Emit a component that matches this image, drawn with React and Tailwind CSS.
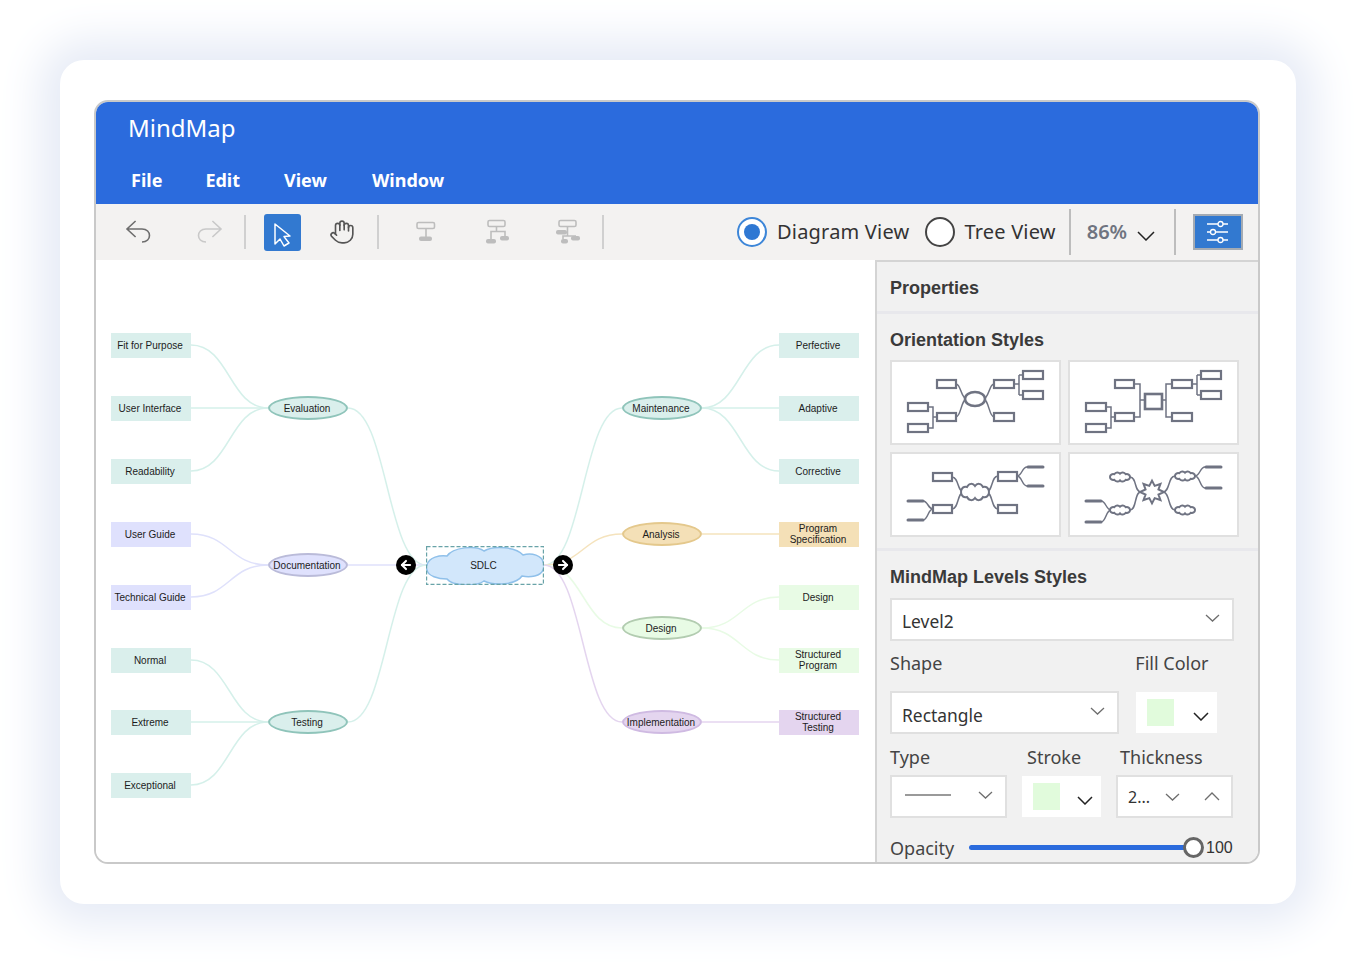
import { ArrowLeft, ArrowRight, Hand } from "lucide-react";

// all diagram coordinates are page pixels, the canvas starts at 96,260
const ORIGIN_X = 96;
const ORIGIN_Y = 260;

const TEAL = { fill: "#daefec", stroke: "#8fc4ba", edge: "#d5f0ea" };
const PURPLE = { fill: "#dfe1fd", stroke: "#babbd9", edge: "#dfe1fb" };
const ORANGE = { fill: "#f4e0b7", stroke: "#e4c88c", edge: "#f5e3bd" };
const GREEN = { fill: "#e8fbe5", stroke: "#b2ccb0", edge: "#e8fbe5" };
const VIOLET = { fill: "#e4d5ef", stroke: "#cfbae2", edge: "#e4d5ef" };

const BRANCHES = [
  {
    label: "Evaluation",
    y: 408,
    side: "left",
    color: TEAL,
    leaves: [
      { label: "Fit for Purpose", y: 345 },
      { label: "User Interface", y: 408 },
      { label: "Readability", y: 471 },
    ],
  },
  {
    label: "Documentation",
    y: 565,
    side: "left",
    color: PURPLE,
    leaves: [
      { label: "User Guide", y: 534 },
      { label: "Technical Guide", y: 597 },
    ],
  },
  {
    label: "Testing",
    y: 722,
    side: "left",
    color: TEAL,
    leaves: [
      { label: "Normal", y: 660 },
      { label: "Extreme", y: 722 },
      { label: "Exceptional", y: 785 },
    ],
  },
  {
    label: "Maintenance",
    y: 408,
    side: "right",
    color: TEAL,
    leaves: [
      { label: "Perfective", y: 345 },
      { label: "Adaptive", y: 408 },
      { label: "Corrective", y: 471 },
    ],
  },
  {
    label: "Analysis",
    y: 534,
    side: "right",
    color: ORANGE,
    leaves: [{ label: "Program\nSpecification", y: 534 }],
  },
  {
    label: "Design",
    y: 628,
    side: "right",
    color: GREEN,
    leaves: [
      { label: "Design", y: 597 },
      { label: "Structured\nProgram", y: 660 },
    ],
  },
  {
    label: "Implementation",
    y: 722,
    side: "right",
    color: VIOLET,
    leaves: [{ label: "Structured\nTesting", y: 722 }],
  },
];

function curve(x1, y1, x2, y2) {
  const mid = (x1 + x2) / 2;
  return `M${x1} ${y1} C${mid} ${y1} ${mid} ${y2} ${x2} ${y2}`;
}

function Edges() {
  return (
    <svg className="absolute left-0 top-0" width="779" height="602" viewBox={`${ORIGIN_X} ${ORIGIN_Y} 779 602`} fill="none" strokeWidth="1.5">
      {BRANCHES.map((branch) => {
        const left = branch.side === "left";
        return (
          <g key={branch.label} stroke={branch.color.edge}>
            <path d={left ? curve(348, branch.y, 426, 565) : curve(544, 565, 622, branch.y)} />
            {branch.leaves.map((leaf) => (
              <path
                key={leaf.label}
                d={left ? curve(191, leaf.y, 268, branch.y) : curve(702, branch.y, 779, leaf.y)}
              />
            ))}
          </g>
        );
      })}
    </svg>
  );
}

function Leaf({ x, y, label, color }) {
  return (
    <div
      className="absolute flex h-[25px] w-20 items-center justify-center whitespace-pre-line pr-0.5 text-center text-[10px] leading-[11px] text-[#1c1c1c]"
      style={{ left: x - ORIGIN_X, top: y - 12.5 - ORIGIN_Y, backgroundColor: color.fill }}
    >
      {label}
    </div>
  );
}

function Branch({ x, y, label, color }) {
  return (
    <div
      className="absolute flex h-6 w-20 items-center justify-center rounded-[50%] border-2 pr-0.5 text-[10px] text-[#1c1c1c]"
      style={{ left: x - ORIGIN_X, top: y - 12 - ORIGIN_Y, backgroundColor: color.fill, borderColor: color.stroke }}
    >
      {label}
    </div>
  );
}

function CenterNode() {
  return (
    <div className="absolute left-[330px] top-[286px] h-[39px] w-[118px]">
      <svg className="absolute left-0 top-0" width="118" height="39" viewBox="0 0 118 39">
        <path
          d="M1 19C3 11 14 9 21 10C27 1 50 -1 58 5C68 -1 90 1 97 9C106 6 116 10 117 16C119 18 119 22 117 24C115 30 104 32 96 30C90 39 68 40 58 35C50 41 27 40 21 33C12 33 2 30 1 24C0 22 0 20 1 19Z"
          fill="#d2e7fb"
          stroke="#8fc0ea"
          strokeWidth="1.5"
        />
        <rect x="0.5" y="0.5" width="117" height="38" fill="none" stroke="#69a3a8" strokeWidth="1.4" strokeDasharray="4 2" />
      </svg>
      <div className="absolute inset-0 flex items-center justify-center pr-[3px] text-[10px] text-[#1c1c1c]">SDLC</div>
    </div>
  );
}

function Diagram() {
  return (
    <div className="relative w-[779px] shrink-0 bg-white font-['Liberation_Sans',sans-serif]">
      <Edges />
      {BRANCHES.map((branch) => {
        const left = branch.side === "left";
        return (
          <div key={branch.label}>
            <Branch x={left ? 268 : 622} y={branch.y} label={branch.label} color={branch.color} />
            {branch.leaves.map((leaf) => (
              <Leaf key={leaf.label} x={left ? 111 : 779} y={leaf.y} label={leaf.label} color={branch.color} />
            ))}
          </div>
        );
      })}
      <CenterNode />
      <div className="absolute left-[300px] top-[295px] flex h-5 w-5 items-center justify-center rounded-full bg-black text-white">
        <ArrowLeft size={14} strokeWidth={3.5} />
      </div>
      <div className="absolute left-[457px] top-[295px] flex h-5 w-5 items-center justify-center rounded-full bg-black text-white">
        <ArrowRight size={14} strokeWidth={3.5} />
      </div>
    </div>
  );
}

function Chevron({ width = 15, height = 8, up = false, color = "#6e6e6e", weight = 1.3, className = "" }) {
  const d = up
    ? `M1 ${height - 1}L${width / 2} 1L${width - 1} ${height - 1}`
    : `M1 1L${width / 2} ${height - 1}L${width - 1} 1`;
  return (
    <svg className={`shrink-0 ${className}`} width={width} height={height} viewBox={`0 0 ${width} ${height}`} fill="none" stroke={color} strokeWidth={weight}>
      <path d={d} />
    </svg>
  );
}

function ToolSeparator() {
  return <div className="h-[34px] w-0.5 shrink-0 bg-[#d0d0d0]" />;
}

function Undo({ color }) {
  return (
    <svg width="28" height="28" viewBox="0 0 28 28" fill="none" stroke={color} strokeWidth="1.6">
      <path d="M10.6 3L2 11L10.6 19M2 11H17C27 11 27 24 17 24" />
    </svg>
  );
}

function Redo({ color }) {
  return (
    <svg width="28" height="28" viewBox="0 0 28 28" fill="none" stroke={color} strokeWidth="1.6">
      <path d="M17.4 3L26 11L17.4 19M26 11H11C1 11 1 24 11 24" />
    </svg>
  );
}

function SingleNodeIcon() {
  return (
    <svg width="28" height="28" viewBox="0 0 28 28" fill="none" stroke="#bdbdbd" strokeWidth="1.6">
      <rect x="5" y="4.5" width="17.5" height="6" rx="1.5" />
      <path d="M14 10.5V19" />
      <rect x="7" y="18.5" width="13" height="4.5" rx="2" fill="#bdbdbd" stroke="none" />
    </svg>
  );
}

function TwoNodeIcon() {
  return (
    <svg width="28" height="28" viewBox="0 0 28 28" fill="none" stroke="#bdbdbd" strokeWidth="1.6">
      <rect x="5" y="2.5" width="17" height="6" rx="1.5" />
      <path d="M13.5 8.5V13.5M8 21V13.5H22V18" />
      <rect x="3" y="21" width="10" height="4.5" rx="2" fill="#bdbdbd" stroke="none" />
      <rect x="17" y="18" width="9" height="4.5" rx="2" fill="#bdbdbd" stroke="none" />
    </svg>
  );
}

function ThreeNodeIcon() {
  return (
    <svg width="28" height="28" viewBox="0 0 28 28" fill="none" stroke="#bdbdbd" strokeWidth="1.6">
      <rect x="6" y="2.5" width="17" height="6" rx="1.5" />
      <path d="M14.5 8.5V18M10 21V18H23" />
      <rect x="3" y="12" width="11" height="4.5" rx="2" fill="#bdbdbd" stroke="none" />
      <rect x="18" y="18" width="9" height="4.5" rx="2" fill="#bdbdbd" stroke="none" />
      <rect x="8" y="21" width="7" height="4.5" rx="2" fill="#bdbdbd" stroke="none" />
    </svg>
  );
}

function Radio({ checked }) {
  return (
    <div
      className={`flex h-[30px] w-[30px] shrink-0 items-center justify-center rounded-full border-2 bg-white ${
        checked ? "border-[#3d86d8]" : "border-[#444]"
      }`}
    >
      {checked && <div className="h-4 w-4 rounded-full bg-[#2f78d3]" />}
    </div>
  );
}

function Toolbar() {
  return (
    <div className="flex h-14 items-center bg-[#f3f2f1] font-['Noto_Sans',sans-serif]">
      <div className="ml-[29px] flex w-7 justify-center"><Undo color="#6e6e6e" /></div>
      <div className="ml-[42px] flex w-7 justify-center"><Redo color="#c9c9c9" /></div>
      <div className="ml-[21px]"><ToolSeparator /></div>
      <div className="relative ml-[18px] h-[37px] w-[37px] rounded-[3px] bg-[#3279d0]">
        <svg className="absolute left-0 top-0" width="37" height="37" viewBox="0 0 37 37" fill="none" stroke="#fff" strokeWidth="1.5" strokeLinejoin="round">
          <path d="M11 10V30L16 25L20 32L25 29L20 22.6L26 22Z" />
        </svg>
      </div>
      <div className="ml-[27px] flex w-7 justify-center text-[#555]"><Hand size={26} strokeWidth={1.5} /></div>
      <div className="ml-[21px]"><ToolSeparator /></div>
      <div className="ml-[33px]"><SingleNodeIcon /></div>
      <div className="ml-[43px]"><TwoNodeIcon /></div>
      <div className="ml-[42px]"><ThreeNodeIcon /></div>
      <div className="ml-[21px]"><ToolSeparator /></div>
      <div className="ml-[133px]"><Radio checked /></div>
      <span className="ml-2.5 text-[20px] tracking-[0.2px] text-[#333]">Diagram View</span>
      <div className="ml-4"><Radio /></div>
      <span className="ml-[9px] text-[20px] tracking-[0.2px] text-[#333]">Tree View</span>
      <div className="ml-[13px] h-[46px] w-0.5 bg-[#bdbdbd]" />
      <span className="ml-4 text-[20px] font-semibold text-[#6f7480]">86%</span>
      <Chevron className="ml-2.5 mt-2" width={18} height={10} color="#222" weight={1.5} />
      <div className="ml-[19px] h-[46px] w-0.5 bg-[#bdbdbd]" />
      <div className="ml-[17px] flex h-[36px] w-[50px] items-center justify-center border-2 border-[#a4abb3] bg-[#3279d0]">
        <svg width="24" height="24" viewBox="0 0 24 24" fill="none" stroke="#fff" strokeWidth="1.3">
          <path d="M1 4H22M1 12H22M1 20H22" />
          <circle cx="14.5" cy="4" r="2.5" fill="#3279d0" />
          <circle cx="7" cy="12" r="2.5" fill="#3279d0" />
          <circle cx="14.5" cy="20" r="2.5" fill="#3279d0" />
        </svg>
      </div>
    </div>
  );
}

function SmallRects({ rects }) {
  return rects.map(([x, y, w, h]) => (
    <rect key={`${x}-${y}`} x={x} y={y} width={w} height={h} fill="#fff" strokeWidth="2.2" />
  ));
}

function Bars({ bars }) {
  return bars.map(([x, y]) => (
    <path key={`${x}-${y}`} d={`M${x} ${y}H${x + 15}`} strokeWidth="3" strokeLinecap="round" />
  ));
}

function Cloud({ x, y, w, h }) {
  // scallops around a box, scaled to the size
  return (
    <path
      transform={`translate(${x} ${y}) scale(${w / 28} ${h / 18})`}
      vectorEffect="non-scaling-stroke"
      d="M0 9C0 5 3 3 6 4C8 0 12 0 14 3C16 0 20 0 22 4C25 3 28 5 28 9C28 13 25 15 22 14C20 18 16 18 14 15C12 18 8 18 6 14C3 15 0 13 0 9Z"
      fill="#fff"
      strokeWidth="2"
    />
  );
}

function Star({ cx, cy }) {
  const points = [];
  for (let i = 0; i < 16; i++) {
    const radius = i % 2 === 0 ? 12 : 7;
    const angle = (i * Math.PI) / 8 - Math.PI / 2;
    points.push(`${cx + radius * Math.cos(angle)},${cy + radius * Math.sin(angle) * 0.95}`);
  }
  return <polygon points={points.join(" ")} fill="#fff" strokeWidth="2" />;
}

function OrientationFrame({ children }) {
  return (
    <div className="h-[85px] w-[171px] border-2 border-[#e0e0e0] bg-white">
      <svg className="-m-0.5 block" width="171" height="85" viewBox="0 0 171 85" fill="none" stroke="#6f7382" strokeWidth="1.5">
        {children}
      </svg>
    </div>
  );
}

const RECT_LAYOUT = [
  [47, 20, 19, 8],
  [104, 20, 20, 8],
  [133, 11, 20, 8],
  [133, 31, 20, 8],
  [104, 53, 20, 8],
  [47, 53, 19, 8],
  [18, 43, 20, 8],
  [18, 64, 20, 8],
];

function OrientationOne() {
  return (
    <OrientationFrame>
      <path d="M66 24C71 24 71 39 77 39M104 24C99 24 99 39 93 39M66 57C71 57 71 39 77 39M104 57C99 57 99 39 93 39M124 24H129M129 15V35M133 15H129M133 35H129M38 47H43V68H38M43 57H47" />
      <SmallRects rects={RECT_LAYOUT} />
      <ellipse cx="85" cy="39" rx="10" ry="7" fill="#fff" strokeWidth="2.6" />
    </OrientationFrame>
  );
}

function OrientationTwo() {
  return (
    <OrientationFrame>
      <path d="M66 24H72V57H66M72 40H77M104 24H98V57H104M98 40H94M124 24H129M129 15V35M133 15H129M133 35H129M38 47H43V68H38M43 57H47" />
      <SmallRects rects={RECT_LAYOUT} />
      <rect x="77" y="34" width="17" height="15" fill="#fff" strokeWidth="2.6" />
    </OrientationFrame>
  );
}

function OrientationThree() {
  return (
    <OrientationFrame>
      <path d="M62 25C69 25 67 40 74 40M108 24C101 24 103 40 96 40M62 57C69 57 67 40 74 40M108 57C101 57 103 40 96 40M127 24C132 24 132 15 137 15M127 24C132 24 132 34 137 34M33 49C38 49 38 57 43 57M33 68C38 68 38 57 43 57" />
      <SmallRects rects={[[43, 21, 19, 8], [108, 20, 19, 9], [43, 53, 19, 8], [108, 53, 19, 8]]} />
      <Bars bars={[[138, 15], [138, 34], [18, 49], [18, 68]]} />
      <Cloud x={71} y={31} w={28} h={18} />
    </OrientationFrame>
  );
}

function OrientationFour() {
  return (
    <OrientationFrame>
      <path d="M62 25C69 25 66 40 73 40M107 24C100 24 102 40 95 40M62 58C69 58 66 40 73 40M107 58C100 58 102 40 95 40M127 24C132 24 132 15 137 15M127 24C132 24 132 36 137 36M33 49C38 49 38 58 43 58M33 70C38 70 38 58 43 58" />
      <Cloud x={42} y={20} w={20} h={10} />
      <Cloud x={107} y={19} w={20} h={10} />
      <Cloud x={42} y={53} w={20} h={10} />
      <Cloud x={107} y={53} w={20} h={10} />
      <Bars bars={[[138, 15], [138, 36], [18, 49], [18, 70]]} />
      <Star cx={84} cy={40} />
    </OrientationFrame>
  );
}

function Select({ className, children }) {
  return (
    <div className={`flex h-[43px] items-center justify-between border-2 border-[#e0e0e0] bg-white pl-[10px] pr-3 text-[17.4px] text-[#333] ${className}`}>
      {children}
      <Chevron className="mb-1" />
    </div>
  );
}

function ColorBox({ className }) {
  return (
    <div className={`flex h-[41px] items-center justify-between bg-white pl-[11px] pr-2 ${className}`}>
      <div className="h-[27px] w-[27px] bg-[#e1fbdc]" />
      <Chevron className="mt-2" width={16} height={9} color="#222" weight={1.5} />
    </div>
  );
}

function Properties() {
  return (
    <div className="flex-1 overflow-hidden border-l-2 border-t-2 border-[#d4d4d4] bg-[#f1f1f1] font-['Noto_Sans',sans-serif] text-[#444]">
      <div className="flex h-[52px] items-center border-b-[3px] border-[#e8e8ec] pl-[13px] pt-1 font-['Liberation_Sans',sans-serif] text-[18px] font-bold text-[#3a3a3a]">
        Properties
      </div>
      <div className="h-[237px] border-b-[3px] border-[#e8e8ec] pl-[13px] pt-[14px]">
        <div className="font-['Liberation_Sans',sans-serif] text-[18px] leading-[24px] font-bold text-[#3a3a3a]">Orientation Styles</div>
        <div className="mt-2 grid w-[349px] grid-cols-[171px_171px] gap-x-[7px] gap-y-[7px]">
          <OrientationOne />
          <OrientationTwo />
          <OrientationThree />
          <OrientationFour />
        </div>
      </div>
      <div className="pl-[13px] pt-[14px]">
        <div className="font-['Liberation_Sans',sans-serif] text-[18px] leading-[24px] font-bold text-[#3a3a3a]">MindMap Levels Styles</div>
        <Select className="mt-[9px] w-[344px]"><span className="pt-1">Level2</span></Select>
        <div className="mt-[10px] flex text-[18px] leading-[24px]">
          <span>Shape</span>
          <span className="ml-[193px]">Fill Color</span>
        </div>
        <div className="mt-4 flex items-center">
          <Select className="w-[229px]"><span className="pt-[5px]">Rectangle</span></Select>
          <ColorBox className="ml-[17px] w-[81px]" />
        </div>
        <div className="mt-[11px] flex text-[18px] leading-[24px]">
          <span className="w-[137px]">Type</span>
          <span className="w-[93px]">Stroke</span>
          <span>Thickness</span>
        </div>
        <div className="mt-[6px] flex items-center">
          <Select className="w-[117px]">
            <div className="mb-1 ml-[3px] h-0.5 w-[46px] bg-[#9a9a9a]" />
          </Select>
          <ColorBox className="ml-[15px] w-[79px]" />
          <div className="ml-[15px] flex h-[43px] w-[117px] items-center border-2 border-[#e0e0e0] bg-white pl-[10px] text-[16px] text-[#333]">
            <span className="w-[37px]">2...</span>
            <Chevron />
            <Chevron className="ml-6" up width={16} height={9} />
          </div>
        </div>
        <div className="mt-[17px] flex items-center text-[18px] leading-[24px]">
          <span className="w-[79px] translate-y-px">Opacity</span>
          <div className="relative h-[5px] w-[224px] rounded-full bg-[#2b6bdd]">
            <div className="absolute -right-[11px] -top-2 h-[21px] w-[21px] rounded-full border-[3px] border-[#666] bg-white" />
          </div>
          <span className="ml-[13px] translate-y-px font-['Liberation_Sans',sans-serif] text-[16px] text-[#333]">100</span>
        </div>
      </div>
    </div>
  );
}

export default function App() {
  return (
    <div className="flex h-[964px] w-[1356px] items-center justify-center overflow-hidden bg-white">
      <div className="h-[844px] w-[1236px] rounded-[24px] bg-white pl-[34px] pt-10 shadow-[0_0_44px_20px_#e6ebf6]">
        <div className="flex h-[764px] w-[1166px] flex-col overflow-hidden rounded-[14px] border-2 border-[#c9c9c9]">
          <div className="h-[102px] shrink-0 bg-[#2b6bdd] pl-8 font-['Noto_Sans',sans-serif] text-white">
            <div className="pt-[9px] text-[24px] leading-[34px]">MindMap</div>
            <div className="mt-[23px] flex text-[18px] font-bold leading-[24px]">
              <span className="ml-[3px]">File</span>
              <span className="ml-[43px]">Edit</span>
              <span className="ml-[44px]">View</span>
              <span className="ml-[45px]">Window</span>
            </div>
          </div>
          <Toolbar />
          <div className="flex min-h-0 flex-1">
            <Diagram />
            <Properties />
          </div>
        </div>
      </div>
    </div>
  );
}
